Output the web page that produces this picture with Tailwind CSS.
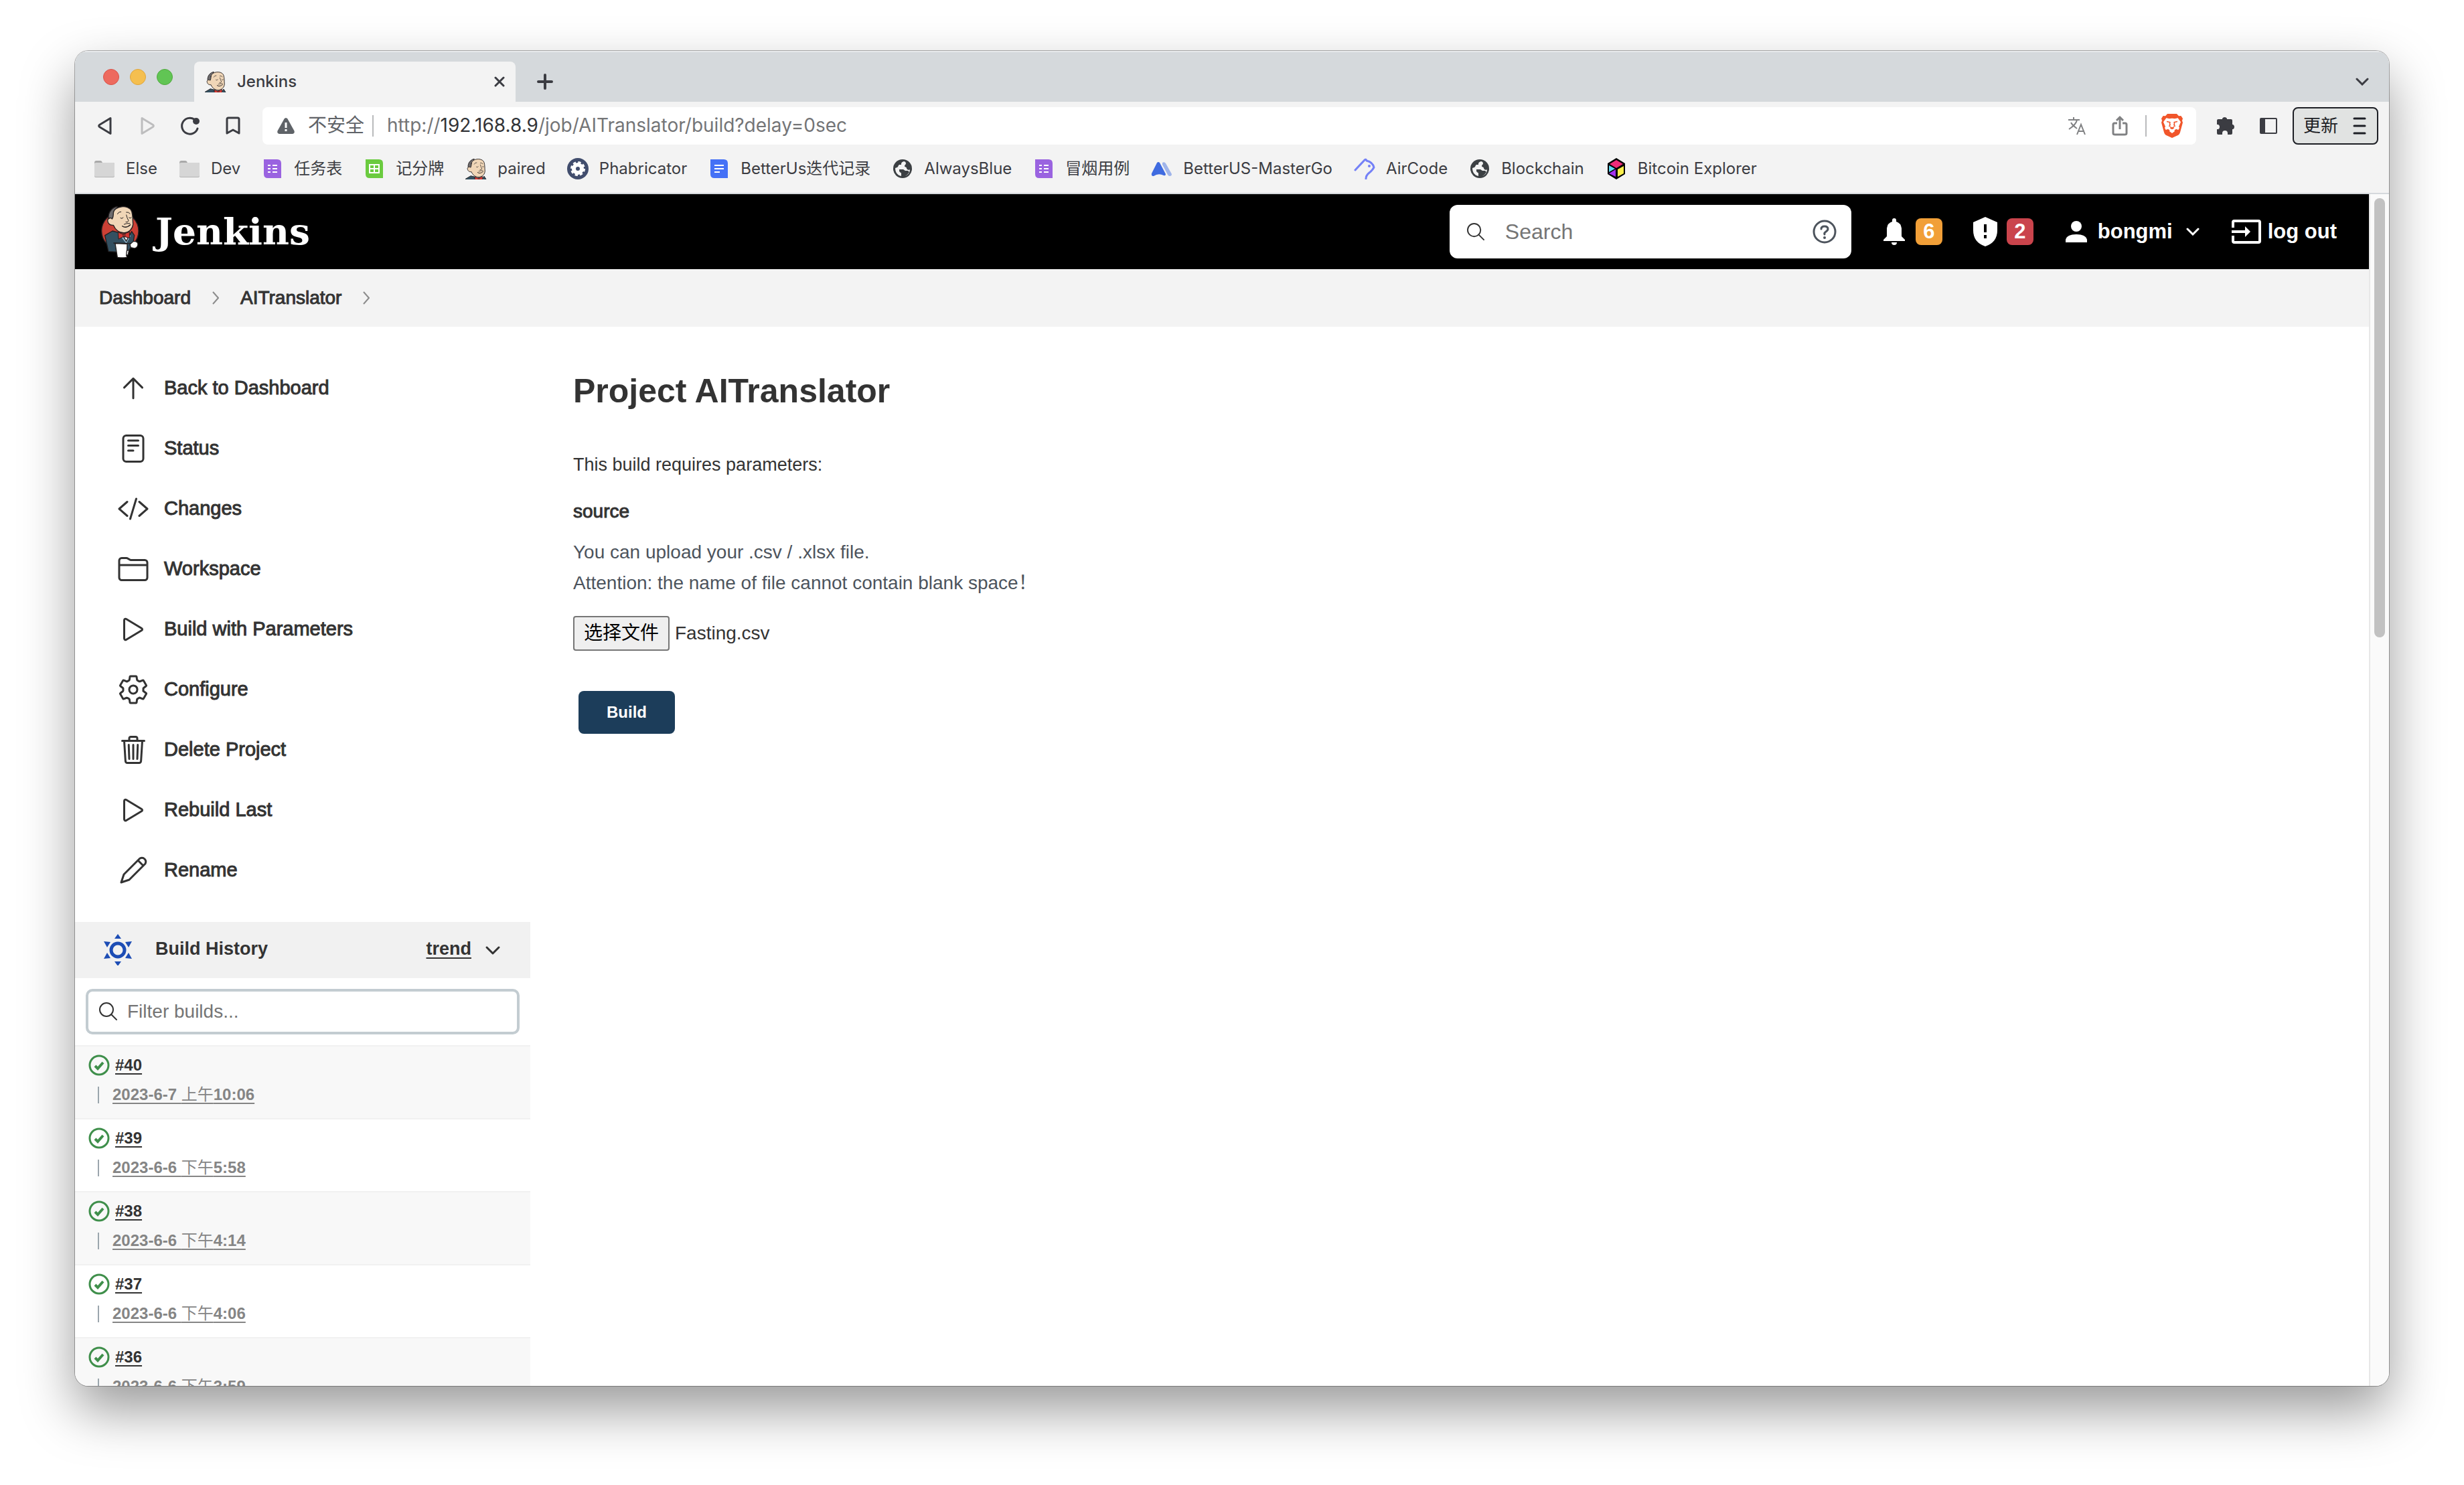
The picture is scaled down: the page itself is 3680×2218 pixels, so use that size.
<!DOCTYPE html>
<html lang="zh-CN">
<head>
<meta charset="utf-8">
<title>Jenkins</title>
<script src="https://cdn.jsdelivr.net/npm/@tailwindcss/browser@4"></script>
</head>
<body class="bg-white">
<svg class="hidden" aria-hidden="true">
  <defs>
    <!-- butler mascot -->
    <symbol id="butler" viewBox="0 0 180 250" preserveAspectRatio="xMidYMin slice">
      <g stroke="#231f20" stroke-width="4" stroke-linejoin="round" stroke-linecap="round">
        <path fill="#335061" d="M20 140 L54 120 L84 128 L114 168 L140 122 L152 140 L146 176 L122 216 L36 212 Z"/>
        <path fill="#8fb6cc" stroke="none" d="M92 146 L136 140 L116 176 Z"/>
        <path fill="#fff" d="M104 146 L126 144 L116 166 Z"/>
        <path fill="#6d6b6d" d="M36 62 C34 36 52 14 76 10 L70 40 L58 70 L40 66 Z"/>
        <path fill="#f0d6b7" d="M58 40 C60 6 128 0 140 32 C146 50 144 70 146 90 C144 110 130 126 108 128 C84 130 66 114 58 94 C42 96 32 84 32 72 C34 60 50 60 52 66 C56 62 58 50 58 40 Z"/>
        <path fill="none" stroke-width="3" d="M76 44 Q82 32 92 34 M116 36 Q126 34 132 42"/>
        <path fill="none" stroke-width="3" d="M90 62 Q96 68 102 60 M128 60 Q132 66 138 60"/>
        <path fill="none" stroke-width="3" d="M116 48 Q120 64 126 74 Q122 84 114 80"/>
        <path fill="none" stroke-width="4" d="M98 98 Q114 110 134 92"/>
        <path fill="none" stroke-width="3" d="M106 90 Q118 84 132 86"/>
        <path fill="#d33833" stroke-width="3" d="M80 126 L100 134 L108 132 L130 124 L130 152 L110 146 L102 146 L82 156 Z"/>
        <path fill="none" stroke-width="3" d="M102 134 V146 M110 132 V146"/>
      </g>
    </symbol>
    <symbol id="folder" viewBox="0 0 32 32">
      <path fill="#a9a9a9" d="M1 7q0-3 3-3h6q2 0 3 3v6H1z"/>
      <rect x="1" y="7" width="30" height="22" rx="2" fill="#b3b3b3"/>
      <rect x="1" y="7" width="30" height="21" rx="2" fill="#d6d6d6"/>
    </symbol>
    <symbol id="sheet" viewBox="0 0 32 32">
      <path fill="#9a63e0" d="M3 2h20q6 0 6 6v22H9q-6 0-6-6z"/>
      <path stroke="#fff" stroke-width="2" d="M9 11h4m3 0h7M9 16h4m3 0h7M9 21h4m3 0h7"/>
    </symbol>
    <symbol id="globe" viewBox="0 0 32 32">
      <circle cx="16" cy="16" r="14" fill="#3c4043"/>
      <path fill="#f3f3f3" d="M18 5c-4 1-4 3-4 5h-3c-2 1-1 3-3 4l-3 1c0 7 4 11 9 12v-4c0-2-3-1-3-4v-2h6l3 2h4l2 2c-2 3-4 5-6 6 5-2 7-6 7-10-2 2-5 0-5-2 0-2-3-1-3-3s2-2 2-4-2-3-3-3z"/>
    </symbol>
    <symbol id="search" viewBox="0 0 28 28">
      <g fill="none" stroke="currentColor" stroke-width="2" stroke-linecap="round"><circle cx="11" cy="11" r="10"/><path d="M18 18l8 8"/></g>
    </symbol>
    <symbol id="play" viewBox="0 0 512 512">
      <path fill="none" stroke="currentColor" stroke-width="32" d="M112 111v290c0 17.44 17 28.52 31 20.16l247.9-148.37c12.12-7.25 12.12-26.33 0-33.58L143 90.84c-14-8.36-31 2.72-31 20.16z"/>
    </symbol>
    <symbol id="ok" viewBox="0 0 32 32">
      <g fill="none" stroke="#3f8f4b"><circle cx="16" cy="16" r="14" stroke-width="3"/><path stroke-width="4" d="M10 17l4 4 8-9"/></g>
    </symbol>
  </defs>
</svg>

<div class="flex h-screen flex-col px-28 pt-[76px] pb-[148px]">
<div class="flex min-h-0 flex-1 flex-col overflow-hidden rounded-[20px] bg-white shadow-[0_0_0_1px_rgba(0,0,0,0.3),0_36px_80px_rgba(0,0,0,0.4)]">

  <!-- browser chrome -->
  <header class="bg-[#f3f3f3] font-['Inter','Noto_Sans_CJK_SC',sans-serif] text-2xl text-[#3b3c42]">
    <div class="flex h-[76px] items-end border-t-2 border-[#e8eaec] bg-[#d5d9dc]">
      <div class="flex h-full w-[178px] items-center gap-4 pb-0 pl-[42px]">
        <span class="size-6 rounded-full border border-[#d9534a] bg-[#ed6a5e]"></span>
        <span class="size-6 rounded-full border border-[#dfa63c] bg-[#f5bf4f]"></span>
        <span class="size-6 rounded-full border border-[#51a93f] bg-[#61c554]"></span>
      </div>
      <div class="flex h-[60px] w-[480px] items-center rounded-t-lg bg-[#f3f3f3] pr-4 pl-4">
        <svg class="size-8" viewBox="0 0 32 32"><svg x="-1" y="0" width="34" height="32" viewBox="14 4 148 148" preserveAspectRatio="xMidYMin slice"><use href="#butler" width="180" height="250"/></svg></svg>
        <span class="ml-4 flex-1 font-medium">Jenkins</span>
        <button aria-label="Close tab"><svg class="size-4" viewBox="0 0 16 16"><path stroke="currentColor" stroke-width="3" stroke-linecap="round" d="M2 2l12 12M14 2L2 14"/></svg></button>
      </div>
      <button aria-label="New tab" class="ml-8 flex h-[60px] items-center"><svg class="size-6" viewBox="0 0 24 24"><path stroke="currentColor" stroke-width="4" stroke-linecap="round" d="M12 2v20M2 12h20"/></svg></button>
      <button aria-label="Tab list" class="mr-[30px] ml-auto flex h-[60px] items-center"><svg class="h-3 w-5" viewBox="0 0 20 12"><path fill="none" stroke="currentColor" stroke-width="3" stroke-linecap="round" d="M2 2l8 8 8-8"/></svg></button>
    </div>

    <div class="flex h-[72px] items-center pr-4 pl-3">
      <button aria-label="Back" class="flex w-16 justify-center"><svg class="size-8" viewBox="0 0 32 32"><path fill="none" stroke="currentColor" stroke-width="3" stroke-linejoin="round" d="M25 4.500L8.500 14.500Q7 16 8.500 17.500L25 27.500Z"/></svg></button>
      <button aria-label="Forward" class="flex w-16 justify-center text-[#bdbdbe]"><svg class="size-8" viewBox="0 0 32 32"><path fill="none" stroke="currentColor" stroke-width="3" stroke-linejoin="round" d="M8 4.500L24.500 14.500Q26 16 24.500 17.500L8 27.500Z"/></svg></button>
      <button aria-label="Reload" class="flex w-16 justify-center"><svg class="size-8" viewBox="0 0 32 32"><path fill="none" stroke="currentColor" stroke-width="3" stroke-linecap="round" d="M22 6A12 12 0 1 0 27 20"/><circle cx="25" cy="9" r="5" fill="currentColor"/></svg></button>
      <button aria-label="Bookmark" class="flex w-16 justify-center"><svg class="size-8" viewBox="0 0 32 32"><path fill="none" stroke="currentColor" stroke-width="3" stroke-linejoin="round" d="M7 6q0-2 2-2h14q2 0 2 2v21l-9-5-9 5z"/></svg></button>
      <div class="ml-3 flex h-14 flex-1 items-center rounded-lg bg-white pl-[22px] text-[28px] text-[#747577]">
        <svg class="size-[26px]" viewBox="0 0 26 26"><path fill="#5f6368" d="M10.500 2.500q2.500-3 5 0l10 18q1 4-2.500 4.500H3q-3.500-.5-2.500-4.500z"/><path stroke="#fff" stroke-width="3" d="M13 8v8m0 2v3"/></svg>
        <span class="ml-5 text-[#5f6368]">不安全</span>
        <span class="mr-5 ml-3 h-8 w-0.5 bg-[#b9babc]"></span>
        <span>http://<span class="text-[#333438]">192.168.8.9</span>/job/AITranslator/build?delay=0sec</span>
        <button aria-label="Translate" class="ml-auto flex w-16 justify-center"><svg class="size-7" viewBox="0 0 28 28"><path fill="none" stroke="#808183" stroke-width="2" d="M1 5h17M9 1v4M14 5c-1 6-6 10-12 14M5 9c2 4 5 6 9 9M14 27l6-15 6 15M16 22h9"/></svg></button>
        <button aria-label="Share" class="flex w-16 justify-center"><svg class="size-8" viewBox="0 0 32 32"><path fill="none" stroke="#808183" stroke-width="3" d="M12 12H8q-2 0-2 2v13q0 2 3 2h14q3 0 3-2V14q0-2-2-2h-4M16 21V4M11 8l5-5 5 5"/></svg></button>
        <span class="mr-0.5 ml-1.5 h-8 w-0.5 bg-[#b9babc]"></span>
        <button aria-label="Brave Shields" class="flex w-[72px] justify-center">
          <svg class="h-9 w-8" viewBox="0 0 96 108"><path fill="#f1562b" d="M27 0h42l9 10 10-1 8 12-3 10 3 8-12 44q-2 8-8 12L48 108 20 95q-6-4-8-12L0 39l3-8-3-10L8 9l10 1z"/><path fill="#fff" d="M22 19l14 3q12-4 24 0l14-3 13 18-9 20 3 6-5 9-10-4-8 6 2 4-12 9-12-9 2-4-8-6-10 4-5-9 3-6-9-20z"/><path fill="#f1562b" d="M24 32l17 4-1 8 2 7-5 4 11 6 11-6-5-4 2-7-1-8 17-4v5l-12 3 1 5-1 6 4 4-9 6 2 4-9 5-9-5 2-4-9-6 4-4-1-6 1-5-12-3z"/></svg>
        </button>
      </div>
      <button aria-label="Extensions" class="ml-3 flex w-16 justify-center"><svg class="size-8" viewBox="0 0 32 32"><path fill="currentColor" d="M3 8q0-2 2-2h6V5a4 4 0 0 1 7 0v1h6q2 0 2 2v6h1a4 4 0 0 1 0 7h-1v6q0 2-2 2h-5v-2a4 4 0 0 0-8 0v2H5q-2 0-2-2v-6h2a4 4 0 0 0 0-7H3z"/></svg></button>
      <button aria-label="Sidebar" class="flex w-16 justify-center"><svg class="size-7" viewBox="0 0 28 28"><rect x="2" y="3" width="24" height="22" rx="1" fill="none" stroke="currentColor" stroke-width="2"/><path fill="currentColor" d="M2 3h7v22H2z"/></svg></button>
      <button class="ml-1 flex h-14 w-32 items-center justify-between rounded-lg border-2 border-[#1d1f25] bg-[#e1e3e2] pr-4 pl-3.5 text-[26px] text-[#1d1f25]">更新
        <svg class="h-7 w-5" viewBox="0 0 20 28"><path stroke="currentColor" stroke-width="3" stroke-linecap="round" d="M2 3h16M2 14h16M2 25h16"/></svg>
      </button>
    </div>

    <nav class="flex h-[66px] items-start gap-8 border-b-2 border-[#d5d9dc] pt-3 pl-7 whitespace-nowrap">
      <a href="#" class="flex h-8 items-center gap-4"><svg class="size-8"><use href="#folder"/></svg>Else</a>
      <a href="#" class="flex h-8 items-center gap-4"><svg class="size-8"><use href="#folder"/></svg>Dev</a>
      <a href="#" class="flex h-8 items-center gap-4"><svg class="size-8"><use href="#sheet"/></svg>任务表</a>
      <a href="#" class="flex h-8 items-center gap-4"><svg class="size-8" viewBox="0 0 32 32"><path fill="#6bcb3f" d="M3 2h20q6 0 6 6v22H9q-6 0-6-6z"/><path fill="none" stroke="#fff" stroke-width="2" d="M9 10h14v12H9zM9 16h14M16 10v12"/></svg>记分牌</a>
      <a href="#" class="flex h-8 items-center gap-4"><svg class="size-8" viewBox="0 0 32 32"><svg x="-1" y="0" width="34" height="32" viewBox="14 4 148 148" preserveAspectRatio="xMidYMin slice"><use href="#butler" width="180" height="250"/></svg></svg>paired</a>
      <a href="#" class="flex h-8 items-center gap-4"><svg class="size-8" viewBox="0 0 32 32"><circle cx="16" cy="16" r="16" fill="#414d6d"/><circle cx="16" cy="16" r="6" fill="none" stroke="#fff" stroke-width="6"/><circle cx="16" cy="16" r="9" fill="none" stroke="#fff" stroke-width="4" stroke-dasharray="4 3.070"/></svg>Phabricator</a>
      <a href="#" class="flex h-8 items-center gap-4"><svg class="size-8" viewBox="0 0 32 32"><path fill="#4571f6" d="M3 2h20q6 0 6 6v22H9q-6 0-6-6z"/><path stroke="#fff" stroke-width="2" d="M9 11h14M9 16h14M9 21h8"/></svg>BetterUs迭代记录</a>
      <a href="#" class="flex h-8 items-center gap-4"><svg class="size-8"><use href="#globe"/></svg>AlwaysBlue</a>
      <a href="#" class="flex h-8 items-center gap-4"><svg class="size-8"><use href="#sheet"/></svg>冒烟用例</a>
      <a href="#" class="flex h-8 items-center gap-4"><svg class="size-8" viewBox="0 0 32 32"><path fill="#9fb4ea" d="M17 7q3-2 5 1l9 16q0 3-3 3-2 0-3-2l-8-15z"/><path fill="#3f6be0" d="M9 7q2-2 4 0l9 17q0 3-3 2-8-4-15 1-4 0-3-4z"/></svg>BetterUS-MasterGo</a>
      <a href="#" class="flex h-8 items-center gap-4"><svg class="size-8" viewBox="0 0 32 32"><path fill="none" stroke="#7481f7" stroke-width="3" stroke-linejoin="round" stroke-linecap="round" d="M2 18L16 3q2-2 3 1 9 2 11 10-2 4-7 8-5 4-5 9"/><circle cx="23" cy="12" r="2" fill="#7481f7"/></svg>AirCode</a>
      <a href="#" class="flex h-8 items-center gap-4"><svg class="size-8"><use href="#globe"/></svg>Blockchain</a>
      <a href="#" class="flex h-8 items-center gap-4"><svg class="size-8" viewBox="0 0 32 32"><path d="M16 0l13 8v16l-13 8-13-8V8z"/><path fill="#ed2c78" d="M16 3l10 6-10 6-10-6z"/><path fill="#5fdcf5" d="M5 11l9 5-9 5z"/><path fill="#a333ef" d="M5 23l10-6v11z"/><path fill="#fdf04c" d="M18 17l9-5v11l-9 5z"/></svg>Bitcoin Explorer</a>
    </nav>
  </header>

  <div class="flex min-h-0 flex-1">
  <!-- Jenkins page -->
  <div class="flex min-w-0 flex-1 flex-col overflow-hidden font-['Liberation_Sans','Noto_Sans_CJK_SC',sans-serif] text-[#333333]">
    <header class="flex h-28 shrink-0 items-center bg-black pr-12 pl-[38px] text-[31px] font-bold text-white">
      <a href="#" class="flex items-center gap-[22px]">
        <svg class="h-[82px] w-[60px]" viewBox="0 0 180 246">
          <circle cx="88" cy="120" r="83" fill="#cc4035" stroke="#231f20" stroke-width="4"/>
          <use href="#butler" width="180" height="250"/>
          <path fill="#fff" stroke="#231f20" stroke-width="4" d="M66 176l54 2-2 60q-20 4-42 0z"/>
          <path fill="#fff" stroke="#231f20" stroke-width="4" d="M132 180l16-14q20 0 20 14-2 16-16 18l-16-4zM118 208l10-2-4 20-8 4z"/>
          <path stroke="#231f20" stroke-width="4" d="M58 174l80 2"/>
        </svg>
        <span class="font-['DejaVu_Serif',serif] text-[55px] leading-[64px]">Jenkins</span>
      </a>
      <div class="ml-auto flex items-center gap-10">
        <label class="flex h-20 w-[600px] items-center rounded-xl bg-white pr-[22px] pl-[26px] text-[#333]">
          <svg class="size-[27px]"><use href="#search"/></svg>
          <input type="search" aria-label="Search" placeholder="Search" class="ml-[30px] min-w-0 flex-1 text-[32px] font-normal placeholder:text-[#757575]">
          <svg class="size-9" viewBox="0 0 36 36"><circle cx="18" cy="18" r="16" fill="none" stroke="#4d545d" stroke-width="3"/><path fill="none" stroke="#4d545d" stroke-width="3" stroke-linecap="round" d="M13 14q0-4 5-4t5 4q0 2-3 4t-2 4"/><circle cx="18" cy="27" r="2" fill="#4d545d"/></svg>
        </label>
        <button class="flex items-center gap-2" aria-label="6 notifications">
          <svg class="size-12" viewBox="0 0 48 48"><path fill="#fff" d="M8 38v-2l5-5V19q1-8 8-10V7a3 3 0 0 1 6 0v2q7 2 8 10v12l5 5v2zM20 40h8q0 4-4 4t-4-4z"/></svg>
          <span class="flex size-10 items-center justify-center rounded-lg bg-[#f19f38]">6</span>
        </button>
        <button class="flex items-center gap-2" aria-label="2 security warnings">
          <svg class="size-12" viewBox="0 0 48 48"><path fill="#fff" d="M24 2l18 8v12q0 18-18 24Q6 40 6 22V10z"/><path stroke="#000" stroke-width="4" d="M24 13v12m0 4v5"/></svg>
          <span class="flex size-10 items-center justify-center rounded-lg bg-[#ca444c]">2</span>
        </button>
        <a href="#" class="mr-1 flex items-center gap-2">
          <svg class="size-12" viewBox="0 0 48 48"><circle cx="24" cy="16" r="8" fill="#fff"/><path fill="#fff" d="M8 40v-4q2-8 16-8t16 8v4z"/></svg>
          bongmi
          <svg class="ml-2 h-3 w-7" viewBox="0 0 28 12"><path fill="none" stroke="#fff" stroke-width="3" stroke-linecap="round" d="M6 2l8 8 8-8"/></svg>
        </a>
        <a href="#" class="flex items-center gap-2.5">
          <svg class="h-9 w-11" viewBox="0 0 44 36"><path fill="none" stroke="#fff" stroke-width="4" d="M2 12V4q0-2 2-2h36q2 0 2 2v28q0 2-2 2H4q-2 0-2-2v-8M0 18h22"/><path fill="#fff" d="M20 10l8 8-8 8z"/></svg>
          log out
        </a>
      </div>
    </header>

    <nav class="flex h-[86px] shrink-0 items-center gap-8 bg-[#f3f3f3] pl-9 text-[28px] [-webkit-text-stroke:1px_#333]" aria-label="Breadcrumb">
      <a href="#">Dashboard</a>
      <svg class="h-5 w-2.5" viewBox="0 0 10 20"><path fill="none" stroke="#8c8c8c" stroke-width="2" d="M1 1l8 9-8 9"/></svg>
      <a href="#">AITranslator</a>
      <svg class="h-5 w-2.5" viewBox="0 0 10 20"><path fill="none" stroke="#8c8c8c" stroke-width="2" d="M1 1l8 9-8 9"/></svg>
    </nav>

    <div class="flex min-h-0 flex-1">
      <aside class="w-[680px] shrink-0 pt-[47px]">
        <nav class="text-[29px] [-webkit-text-stroke:1px_#333]">
          <a href="#" class="flex h-[90px] items-center gap-[22px] pl-[63px]"><svg class="size-12" viewBox="0 0 512 512"><path fill="none" stroke="currentColor" stroke-width="32" stroke-linecap="round" stroke-linejoin="round" d="M112 244l144-144 144 144M256 120v292"/></svg>Back to Dashboard</a>
          <a href="#" class="flex h-[90px] items-center gap-[22px] pl-[63px]"><svg class="size-12" viewBox="0 0 512 512"><g fill="none" stroke="currentColor" stroke-width="32" stroke-linecap="round"><rect x="96" y="48" width="320" height="416" rx="48"/><path d="M176 128h160M176 208h160M176 288h80"/></g></svg>Status</a>
          <a href="#" class="flex h-[90px] items-center gap-[22px] pl-[63px]"><svg class="size-12" viewBox="0 0 512 512"><path fill="none" stroke="currentColor" stroke-width="32" stroke-linecap="round" stroke-linejoin="round" d="M160 368L32 256l128-112M352 368l128-112-128-112M304 96l-96 320"/></svg>Changes</a>
          <a href="#" class="flex h-[90px] items-center gap-[22px] pl-[63px]"><svg class="size-12" viewBox="0 0 512 512"><path fill="none" stroke="currentColor" stroke-width="32" d="M440 432H72a40 40 0 01-40-40V120a40 40 0 0140-40h75.890a40 40 0 0122.190 6.720l27.840 18.560a40 40 0 0022.190 6.720H440a40 40 0 0140 40v240a40 40 0 01-40 40zM32 192h448"/></svg>Workspace</a>
          <a href="#" class="flex h-[90px] items-center gap-[22px] pl-[63px]"><svg class="size-12"><use href="#play"/></svg>Build with Parameters</a>
          <a href="#" class="flex h-[90px] items-center gap-[22px] pl-[63px]"><svg class="size-12" viewBox="0 0 512 512"><path fill="none" stroke="currentColor" stroke-width="32" stroke-linecap="round" stroke-linejoin="round" d="M262.290 192.310a64 64 0 1057.400 57.400 64.130 64.130 0 00-57.400-57.400zM416.390 256a154.340 154.340 0 01-1.530 20.790l45.210 35.460a10.810 10.810 0 012.450 13.750l-42.770 74a10.810 10.810 0 01-13.140 4.590l-44.900-18.080a16.110 16.110 0 00-15.170 1.750A164.480 164.480 0 01325 400.800a15.940 15.940 0 00-8.820 12.140l-6.730 47.890a11.080 11.080 0 01-10.680 9.170h-85.540a11.110 11.110 0 01-10.690-8.870l-6.720-47.820a16.070 16.070 0 00-9-12.220 155.300 155.300 0 01-21.460-12.570 16 16 0 00-15.110-1.710l-44.890 18.070a10.810 10.810 0 01-13.140-4.580l-42.770-74a10.800 10.800 0 012.450-13.750l38.210-30a16.050 16.050 0 006-14.080c-.360-4.170-.580-8.330-.580-12.500s.210-8.270.580-12.350a16 16 0 00-6.070-13.940l-38.190-30A10.810 10.810 0 0149.480 186l42.770-74a10.810 10.810 0 0113.140-4.590l44.900 18.080a16.110 16.110 0 0015.170-1.750A164.480 164.480 0 01187 111.200a15.940 15.940 0 008.820-12.140l6.730-47.890A11.080 11.080 0 01213.230 42h85.540a11.110 11.110 0 0110.690 8.870l6.720 47.820a16.070 16.070 0 009 12.220 155.300 155.300 0 0121.460 12.570 16 16 0 0015.110 1.710l44.890-18.070a10.810 10.810 0 0113.140 4.580l42.770 74a10.800 10.800 0 01-2.450 13.750l-38.210 30a16.050 16.050 0 00-6.050 14.080c.330 4.140.550 8.300.550 12.470z"/></svg>Configure</a>
          <a href="#" class="flex h-[90px] items-center gap-[22px] pl-[63px]"><svg class="size-12" viewBox="0 0 512 512"><path fill="none" stroke="currentColor" stroke-width="32" stroke-linecap="round" stroke-linejoin="round" d="M112 112l20 320c.950 18.490 14.400 32 32 32h184c17.670 0 30.870-13.510 32-32l20-320M80 112h352M192 112V72a23.930 23.930 0 0124-24h80a23.930 23.930 0 0124 24v40M256 176v224M184 176l8 224M328 176l-8 224"/></svg>Delete Project</a>
          <a href="#" class="flex h-[90px] items-center gap-[22px] pl-[63px]"><svg class="size-12"><use href="#play"/></svg>Rebuild Last</a>
          <a href="#" class="flex h-[90px] items-center gap-[22px] pl-[63px]"><svg class="size-12" viewBox="0 0 48 48"><path fill="none" stroke="currentColor" stroke-width="3" stroke-linejoin="round" d="M6 42l4-12L34 6q4-2 7 1 3 3 1 7L18 38zM31 9l8 8"/></svg>Rename</a>
        </nav>

        <div class="mt-8 flex h-[84px] items-center bg-[#f1f1f1] pr-11 pb-1 pl-10 text-[27px] font-bold">
          <svg class="mt-0.5 size-12" viewBox="0 0 48 48"><circle cx="24" cy="25" r="10" fill="none" stroke="#1d4db5" stroke-width="5"/><g fill="#1d4db5"><path d="M24 1l5 7H19zM24 49l5-7H19zM3 12l10 1-5 8zM45 12l-10 1 5 8zM3 38l10-1-5-8zM45 38l-10-1 5-8z"/></g></svg>
          <h2 class="ml-8">Build History</h2>
          <a href="#" class="ml-auto underline decoration-2 underline-offset-4">trend</a>
          <svg class="mt-1 ml-5 h-4 w-6" viewBox="0 0 24 16"><path fill="none" stroke="currentColor" stroke-width="3" stroke-linecap="round" stroke-linejoin="round" d="M3 4l9 9 9-9"/></svg>
        </div>
        <div class="px-4 py-4">
          <label class="flex h-[68px] items-center rounded-[10px] border-4 border-[#c3ccd1] pl-4">
            <svg class="size-7"><use href="#search"/></svg>
            <input type="search" aria-label="Filter builds" placeholder="Filter builds..." class="ml-[14px] min-w-0 flex-1 text-[28px] placeholder:text-[#757575]">
          </label>
        </div>
        <table class="w-full border-collapse text-2xl font-bold">
          <tbody>
            <tr class="h-[109px] border-t-2 border-[#f1f1f1] bg-[#f8f8f8]"><td class="pt-2.5 pl-5 align-top">
              <div class="flex h-9 items-center gap-2"><svg class="size-8"><use href="#ok"/></svg><a href="#" class="underline decoration-2 underline-offset-4">#40</a></div>
              <div class="mt-2 flex h-9 items-center pl-3.5 text-[#858585]"><span class="mr-5 h-[25px] w-0.5 bg-[#9ba6ad]"></span><a href="#" class="underline decoration-2 underline-offset-4">2023-6-7 <span class="font-normal">上午</span>10:06</a></div></td></tr>
            <tr class="h-[109px] border-t-2 border-[#f1f1f1]"><td class="pt-2.5 pl-5 align-top">
              <div class="flex h-9 items-center gap-2"><svg class="size-8"><use href="#ok"/></svg><a href="#" class="underline decoration-2 underline-offset-4">#39</a></div>
              <div class="mt-2 flex h-9 items-center pl-3.5 text-[#858585]"><span class="mr-5 h-[25px] w-0.5 bg-[#9ba6ad]"></span><a href="#" class="underline decoration-2 underline-offset-4">2023-6-6 <span class="font-normal">下午</span>5:58</a></div></td></tr>
            <tr class="h-[109px] border-t-2 border-[#f1f1f1] bg-[#f8f8f8]"><td class="pt-2.5 pl-5 align-top">
              <div class="flex h-9 items-center gap-2"><svg class="size-8"><use href="#ok"/></svg><a href="#" class="underline decoration-2 underline-offset-4">#38</a></div>
              <div class="mt-2 flex h-9 items-center pl-3.5 text-[#858585]"><span class="mr-5 h-[25px] w-0.5 bg-[#9ba6ad]"></span><a href="#" class="underline decoration-2 underline-offset-4">2023-6-6 <span class="font-normal">下午</span>4:14</a></div></td></tr>
            <tr class="h-[109px] border-t-2 border-[#f1f1f1]"><td class="pt-2.5 pl-5 align-top">
              <div class="flex h-9 items-center gap-2"><svg class="size-8"><use href="#ok"/></svg><a href="#" class="underline decoration-2 underline-offset-4">#37</a></div>
              <div class="mt-2 flex h-9 items-center pl-3.5 text-[#858585]"><span class="mr-5 h-[25px] w-0.5 bg-[#9ba6ad]"></span><a href="#" class="underline decoration-2 underline-offset-4">2023-6-6 <span class="font-normal">下午</span>4:06</a></div></td></tr>
            <tr class="h-[109px] border-t-2 border-[#f1f1f1] bg-[#f8f8f8]"><td class="pt-2.5 pl-5 align-top">
              <div class="flex h-9 items-center gap-2"><svg class="size-8"><use href="#ok"/></svg><a href="#" class="underline decoration-2 underline-offset-4">#36</a></div>
              <div class="mt-2 flex h-9 items-center pl-3.5 text-[#858585]"><span class="mr-5 h-[25px] w-0.5 bg-[#9ba6ad]"></span><a href="#" class="underline decoration-2 underline-offset-4">2023-6-6 <span class="font-normal">下午</span>3:59</a></div></td></tr>
          </tbody>
        </table>
      </aside>

      <main class="min-w-0 flex-1 pt-[66px] pl-16 text-[27px] leading-10">
        <h1 class="text-[50px] leading-[60px] font-bold">Project AITranslator</h1>
        <p class="mt-[60px]">This build requires parameters:</p>
        <form>
          <h2 class="mt-[30px] text-[28px] [-webkit-text-stroke:1px_#333]">source</h2>
          <p class="mt-[18px] text-[28px] leading-[46px] text-[#4d545d]">You can upload your .csv / .xlsx file.<br>Attention: the name of file cannot contain blank space！</p>
          <div class="mt-[26px] flex items-center gap-2 text-[28px]">
            <input id="source" type="file" class="sr-only">
            <label for="source" class="flex h-[52px] w-36 items-center justify-center rounded-[4px] border-2 border-[#767676] bg-[#efefef] text-black">选择文件</label>
            <output for="source">Fasting.csv</output>
          </div>
          <button type="button" class="mt-[60px] ml-2 h-16 w-36 rounded-lg bg-[#1c3d5a] text-2xl font-bold text-white">Build</button>
        </form>
      </main>
    </div>
  </div>
  <div class="w-[30px] shrink-0 border-l-2 border-[#e8e8e8] bg-[#fafafa] pt-1.5 pl-1.5">
    <div class="h-[656px] w-4 rounded-full bg-[#c1c1c1]"></div>
  </div>
  </div>
</div>
</div>
</body>
</html>
